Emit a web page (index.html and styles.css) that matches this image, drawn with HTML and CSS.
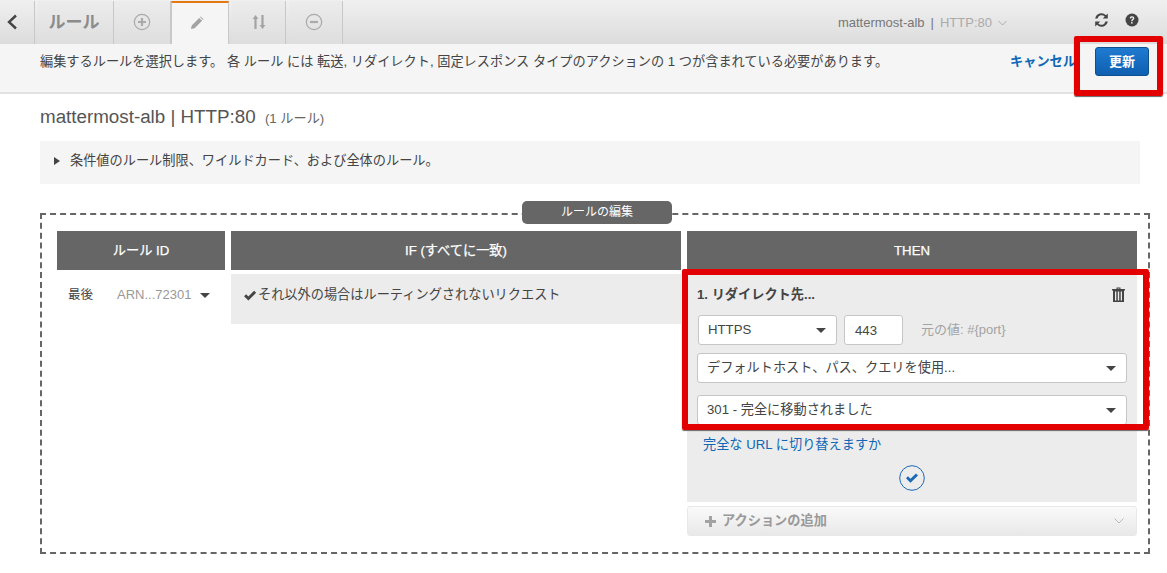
FILE: index.html
```html
<!DOCTYPE html>
<html lang="ja">
<head>
<meta charset="utf-8">
<title>ルールの編集</title>
<link rel="stylesheet" href="styles.css">
</head>
<body>
<nav class="nav">
  <div class="tab tab-back"><svg width="12" height="16" viewBox="0 0 12 16"><path d="M10 1.500 3 8l7 6.500" fill="none" stroke="#444" stroke-width="2.400"/></svg></div>
  <div class="tab tab-title">ルール</div>
  <div class="tab tab-icon"><svg width="18" height="18" viewBox="0 0 18 18"><circle cx="9" cy="9" r="7.700" fill="none" stroke="#aaa" stroke-width="1.200"/><path d="M9 5v8M5 9h8" stroke="#aaa" stroke-width="2.200"/></svg></div>
  <div class="tab tab-icon tab-active"><svg width="14" height="14" viewBox="0 0 14 14"><path d="M1 13l.7-3.600L9.200 1.900l2.900 2.900-7.500 7.500z M10 1.100l.7-.6 2.800 2.800-.6.7z" fill="#a3a3a3"/></svg></div>
  <div class="tab tab-icon tab-sort"><svg width="14" height="16" viewBox="0 0 14 16"><path d="M3.500 1 6.400 5H4.600v10H2.400V5H.6zM10.500 15 7.600 11h1.800V1h2.200v10h1.800z" fill="#a3a3a3"/></svg></div>
  <div class="tab tab-icon tab-sort tab-minus"><svg width="18" height="18" viewBox="0 0 18 18"><circle cx="9" cy="9" r="7.700" fill="none" stroke="#aaa" stroke-width="1.200"/><path d="M5 9h8" stroke="#aaa" stroke-width="2.200"/></svg></div>
  <div class="nav-fill">
    <span class="lb-name">mattermost-alb</span><span class="lb-sep">|</span><span class="lb-port">HTTP:80</span>
    <svg class="lb-chev" width="9" height="6" viewBox="0 0 9 6"><path d="M.5 1 4.500 5l4-4" fill="none" stroke="#aaa" stroke-width="1"/></svg>
  </div>
  <div class="nav-tools">
    <svg width="15" height="14" viewBox="0 0 15 14"><path d="M13.800.5v5H8.800l1.900-1.900A4.100 4.100 0 0 0 3.600 5.400H1.200A6.300 6.300 0 0 1 12 2.300zM1.200 13.500v-5h5L4.300 10.400a4.100 4.100 0 0 0 7.100-1.800h2.400A6.300 6.300 0 0 1 3 11.700z" fill="#444"/></svg>
    <svg width="14" height="14" viewBox="0 0 14 14"><circle cx="7" cy="7" r="6.500" fill="#444"/><path d="M4.700 5.300C4.800 3.900 5.800 3.300 7 3.300c1.300 0 2.300.8 2.300 1.900 0 1.700-1.800 1.600-1.800 3H6.200c0-2 1.700-1.900 1.700-2.900 0-.5-.4-.8-.9-.8s-.9.300-1 .9z" fill="#f0f0f0"/><rect x="6.100" y="9.100" width="1.500" height="1.500" fill="#f0f0f0"/></svg>
  </div>
</nav>

<header class="notice">
  <p class="notice-text">編集するルールを選択します。 各 ルール には 転送, リダイレクト, 固定レスポンス タイプのアクションの 1 つが含まれている必要があります。</p>
  <a class="cancel">キャンセル</a>
  <button class="btn-update">更新</button>
</header>

<main class="content">
  <h1 class="title">mattermost-alb | HTTP:80 <small class="title-count">(1 ルール)</small></h1>
  <div class="info">
    <svg width="6" height="8" viewBox="0 0 6 8"><path d="M0 0l6 4-6 4z" fill="#444"/></svg>
    <span>条件値のルール制限、ワイルドカード、および全体のルール。</span>
  </div>

  <section class="editor">
    <div class="legend">ルールの編集</div>
    <div class="rules">
      <div class="head">ルール ID</div>
      <div class="head">IF (すべてに一致)</div>
      <div class="head">THEN</div>

      <div class="cell-id">
        <span class="id-last">最後</span>
        <span class="id-arn">ARN...72301</span>
        <i class="caret"></i>
      </div>
      <div class="cell-if">
        <svg width="14" height="12" viewBox="0 0 13 11"><path d="M1 5.700 2.900 3.800 5 5.900 10.300.6 12.200 2.500 5 9.700z" fill="#444"/></svg>
        <span>それ以外の場合はルーティングされないリクエスト</span>
      </div>
      <div class="cell-then">
        <div class="action">
          <div class="action-head">
            <strong>1. リダイレクト先...</strong>
            <svg class="trash" width="13" height="15" viewBox="0 0 13 15"><path d="M4.500 2V.6h4V2H13v1.500H12V15H1V3.500H0V2zM5.700 2h1.600V1.500H5.700zM3 4.500V13.500h1.300v-9zM5.800 4.500v9h1.400v-9zM8.700 4.500v9H10v-9z" fill="#444" fill-rule="evenodd"/></svg>
          </div>
          <div class="proto-row">
            <div class="select select-proto"><span>HTTPS</span><i class="caret"></i></div>
            <div class="port">443</div>
            <span class="hint">元の値: #{port}</span>
          </div>
          <div class="select select-wide select-host"><span>デフォルトホスト、パス、クエリを使用...</span><i class="caret"></i></div>
          <div class="select select-wide select-code"><span>301 - 完全に移動されました</span><i class="caret"></i></div>
          <a class="switch-url">完全な URL に切り替えますか</a>
          <div class="confirm"><svg width="26" height="26" viewBox="0 0 26 26"><circle cx="13" cy="13" r="12.300" fill="none" stroke="#1a68b8" stroke-width="1"/><path d="M7 13.300 9 11.300 11.500 13.800 17 8.500 19 10.500 11.500 17.800z" fill="#1a68b8"/></svg></div>
        </div>
        <div class="add-action">
          <svg width="13" height="13" viewBox="0 0 13 13"><path d="M5 1h3v4h4v3H8v4H5V8H1V5h4z" fill="#a3a3a3"/></svg>
          <span>アクションの追加</span>
          <svg class="add-chev" width="10" height="6" viewBox="0 0 10 6"><path d="M.5.500 5 5 9.500.500" fill="none" stroke="#bbb" stroke-width="1"/></svg>
        </div>
      </div>
    </div>
  </section>
</main>

<div class="mark mark-update"></div>
<div class="mark mark-action"></div>
</body>
</html>
```
FILE: styles.css
```css
* { box-sizing: border-box; }
html, body { margin: 0; padding: 0; }
body {
  position: relative;
  width: 1167px;
  height: 573px;
  overflow: hidden;
  background: #fff;
  color: #444;
  font: 13.200px/18px "Liberation Sans", "Noto Sans CJK JP", sans-serif;
}
.nav {
  display: flex;
  height: 44px;
  padding-top: 1px;
  background: linear-gradient(#f0f0f0, #dcdcdc);
}
.tab {
  display: flex;
  align-items: center;
  justify-content: center;
  padding-bottom: 2px;
  border-right: 1px solid #c8c8c8;
  background: linear-gradient(#ececec, #dedede);
}
.tab-back {
  justify-content: flex-start;
  width: 35px;
  padding-left: 6px;
  background: none;
}
.tab-title {
  width: 76px;
  margin-left: 3px;
  padding: 0 3px 0 0;
  color: #8c8c8c;
  font-size: 17px;
  font-weight: bold;
}
.tab-icon { width: 57px; }
.tab-active {
  width: 58px;
  padding-right: 6px;
  border-top: 2px solid #e47911;
  border-left: 1px solid #c8c8c8;
  background: #f5f5f5;
}
.tab-sort { width: 54px; margin-left: 3px; }
.tab-minus { padding-right: 3px; }
.nav-fill {
  display: flex;
  flex: 1;
  align-items: center;
  justify-content: flex-end;
  padding-right: 87px;
  font-size: 13px;
}
.lb-name { color: #777; }
.lb-sep { margin: 0 6px; color: #777; }
.lb-port { color: #aaa; }
.lb-chev { margin-left: 6px; }
.nav-tools {
  display: flex;
  gap: 16px;
  align-items: center;
  width: 73px;
  padding-bottom: 6px;
}
.notice {
  display: flex;
  align-items: flex-start;
  height: 50px;
  padding: 9px 18px 0 40px;
  border-bottom: 2px solid #e2e2e2;
  background: #f5f5f5;
}
.notice-text { flex: 1; margin: 0; }
.cancel {
  margin-right: 19px;
  color: #0f67b5;
  font-weight: bold;
}
.btn-update {
  width: 54px;
  height: 29px;
  margin-top: -6px;
  border: 1px solid #0e4f8f;
  border-radius: 3px;
  background: linear-gradient(#1f7bd0, #0f5fb0);
  color: #fff;
  font: bold 13px/1 "Liberation Sans", "Noto Sans CJK JP", sans-serif;
}
.content { padding: 0 17px 0 40px; }
.title {
  margin: 13px 0 0;
  color: #555;
  font-size: 18.800px;
  font-weight: normal;
  line-height: 20px;
}
.title-count { margin-left: 4px; color: #666; font-size: 13.200px; }
.info {
  display: flex;
  gap: 10px;
  align-items: center;
  width: 1100px;
  height: 43px;
  margin-top: 12px;
  padding: 0 0 4px 14px;
  background: #f5f5f5;
}
.editor {
  position: relative;
  width: 1110px;
  height: 341px;
  margin-top: 29px;
  padding: 16px 12px 0 15px;
  border: 2px dashed #666;
}
.legend {
  position: absolute;
  top: -14px;
  left: 480px;
  width: 150px;
  height: 23px;
  border-radius: 5px;
  background: #666;
  color: #fff;
  font-size: 12px;
  line-height: 23px;
  text-align: center;
}
.rules {
  display: grid;
  grid-template-columns: 168px 450px 450px;
  grid-template-rows: 39px auto;
  column-gap: 6px;
}
.head {
  background: #666;
  color: #fff;
  line-height: 39px;
  text-align: center;
  -webkit-text-stroke: 0.25px #fff;
}
.cell-id {
  display: flex;
  align-items: center;
  align-self: start;
  height: 50px;
  margin-top: 4px;
  padding: 0 0 8px 11px;
  font-size: 13px;
}
.id-last { width: 49px; font-size: 12.500px; }
.id-arn { color: #999; }
.caret {
  display: inline-block;
  width: 0;
  height: 0;
  border-top: 5px solid #444;
  border-right: 5px solid transparent;
  border-left: 5px solid transparent;
}
.cell-id .caret { margin-left: 9px; }
.cell-if {
  display: flex;
  gap: 1px;
  align-items: flex-start;
  align-self: start;
  height: 50px;
  margin-top: 4px;
  padding: 12px 12px 0;
  background: #ececec;
}
.cell-if svg { margin-top: 4px; }
.cell-then { margin-top: 4px; }
.action { height: 228px; padding: 11px 10px 0; background: #ececec; }
.action-head {
  display: flex;
  align-items: center;
  justify-content: space-between;
  height: 20px;
  padding-right: 2px;
}
.trash { margin-top: -2px; }
.proto-row {
  display: flex;
  align-items: center;
  height: 30px;
  margin-top: 10px;
}
.select {
  display: flex;
  align-items: center;
  justify-content: space-between;
  height: 30px;
  padding: 0 10px 0 9px;
  border: 1px solid #c6c6c6;
  border-radius: 3px;
  background: #fff;
}
.select-proto { width: 139px; margin-left: 1px; }
.port {
  width: 59px;
  height: 30px;
  margin-left: 7px;
  padding: 6px 0 0 10px;
  border: 1px solid #c6c6c6;
  border-radius: 3px;
  background: #fff;
}
.hint { margin-left: 18px; color: #a3a3a3; font-size: 13px; }
.select-host { margin-top: 8px; }
.select-code { margin-top: 12px; }
.switch-url {
  display: block;
  margin: 11px 0 0 6px;
  color: #0f67b5;
}
.confirm { display: flex; justify-content: center; margin-top: 11px; }
.add-action {
  display: flex;
  gap: 5px;
  align-items: center;
  height: 30px;
  margin-top: 4px;
  padding: 0 12px 0 16px;
  border: 1px solid #e8e8e8;
  border-radius: 3px;
  background: linear-gradient(#fafafa, #e8e8e8);
  color: #999;
  font-weight: bold;
}
.add-chev { margin-left: auto; }
.mark {
  position: absolute;
  border: 6px solid #e30000;
  border-radius: 2px;
  box-shadow: 0 1px 1px #666;
}
.mark-update { top: 36px; left: 1074px; width: 89px; height: 60px; }
.mark-action { top: 269px; left: 682px; width: 467px; height: 161px; }
```
